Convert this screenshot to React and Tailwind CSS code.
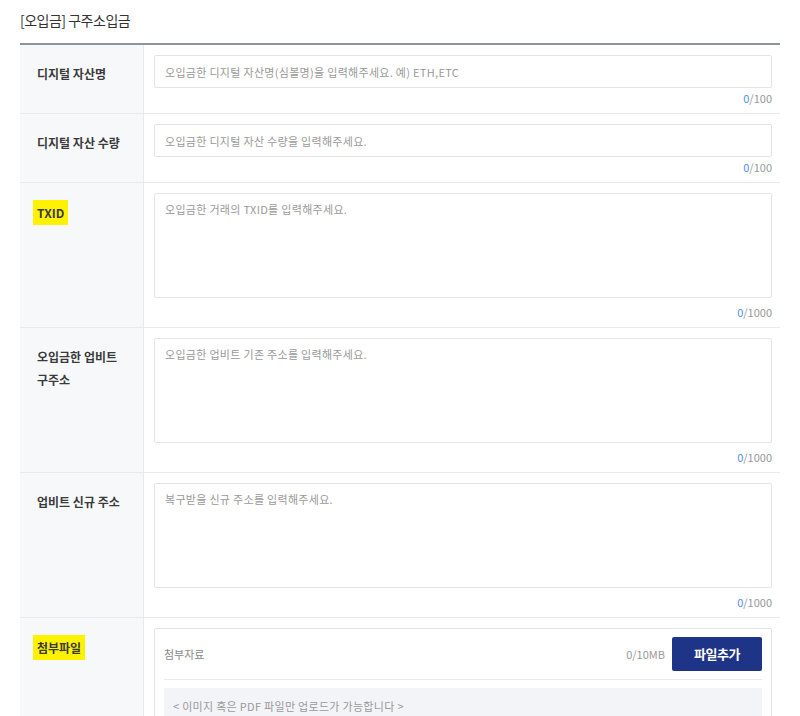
import React from "react";

const FONT = { fontFamily: '"Noto Sans CJK KR", "Noto Sans", sans-serif' };

function Counter({ max, textarea = false }) {
  return (
    <div className={"text-right text-[11px] leading-[18px] text-[#999] " + (textarea ? "mt-[5px]" : "mt-[1px]")}>
      <span className="text-[#4a8ff0]">0</span>/{max}
    </div>
  );
}

function Label({ children, marked = false }) {
  return (
    <div className="w-[124px] shrink-0 bg-[#f7f8fa] border-r border-[#e8e9ed] pl-[17px] pr-[10px] pt-[17px] text-[12px] leading-[23px] font-semibold text-[#3a3a3a]">
      {marked ? (
        <span className="inline-block bg-[#fff200] -ml-[4px] px-[4px] leading-[25px]">{children}</span>
      ) : (
        children
      )}
    </div>
  );
}

function Row({ label, marked, children }) {
  return (
    <div className="flex border-b border-[#e8e9ed]">
      <Label marked={marked}>{label}</Label>
      <div className="flex-1 pl-[10px] pr-[8px] pt-[10px] pb-[6px]">{children}</div>
    </div>
  );
}

function Input({ placeholder }) {
  return (
    <input
      placeholder={placeholder}
      className="block w-full h-[33px] border border-[#e3e4e8] rounded-[2px] px-[10px] text-[11px] tracking-[0.3px] text-[#333] placeholder:text-[#999] outline-none"
      style={FONT}
    />
  );
}

function Area({ placeholder }) {
  return (
    <textarea
      placeholder={placeholder}
      className="block w-full h-[105px] resize-none border border-[#e3e4e8] rounded-[2px] px-[10px] py-[7px] text-[11px] leading-[16px] tracking-[0.3px] text-[#333] placeholder:text-[#999] outline-none"
      style={FONT}
    />
  );
}

export default function App() {
  return (
    <div className="w-[800px] h-[716px] overflow-hidden bg-white px-[20px]" style={FONT}>
      <div className="h-[43px] pt-[10px] text-[14px] leading-[20px] tracking-[-0.5px] text-[#333]">[오입금] 구주소입금</div>
      <div className="border-t-2 border-[#8f939b]">
        <Row label="디지털 자산명">
          <Input placeholder="오입금한 디지털 자산명(심볼명)을 입력해주세요. 예) ETH,ETC" />
          <Counter max={100} />
        </Row>
        <Row label="디지털 자산 수량">
          <Input placeholder="오입금한 디지털 자산 수량을 입력해주세요." />
          <Counter max={100} />
        </Row>
        <Row label="TXID" marked>
          <Area placeholder="오입금한 거래의 TXID를 입력해주세요." />
          <Counter max={1000} textarea />
        </Row>
        <Row
          label={
            <>
              오입금한 업비트
              <br />
              구주소
            </>
          }
        >
          <Area placeholder="오입금한 업비트 기존 주소를 입력해주세요." />
          <Counter max={1000} textarea />
        </Row>
        <Row label="업비트 신규 주소">
          <Area placeholder="복구받을 신규 주소를 입력해주세요." />
          <Counter max={1000} textarea />
        </Row>
        <div className="flex">
          <Label marked>첨부파일</Label>
          <div className="flex-1 pl-[10px] pr-[8px] pt-[10px] pb-[20px]">
            <div className="border border-[#e3e4e8] rounded-[2px] px-[9px] pt-[8px] pb-[10px]">
              <div className="flex items-center h-[34px]">
                <span className="flex-1 text-[11px] text-[#888]">첨부자료</span>
                <span className="text-[11px] text-[#999] mr-[7px]">0/10MB</span>
                <button className="w-[90px] h-[34px] rounded-[2px] bg-[#1d3487] text-white text-[13px] font-bold tracking-[-0.5px]">
                  파일추가
                </button>
              </div>
              <div className="border-t border-[#e8e9ed] mt-[8px] pt-[8px]">
                <div className="bg-[#f3f4f7] h-[40px] pl-[9px] pt-[9px] text-[11px] leading-[18px] tracking-[0.3px] text-[#999]">
                  &lt; 이미지 혹은 PDF 파일만 업로드가 가능합니다 &gt;
                </div>
              </div>
            </div>
          </div>
        </div>
      </div>
    </div>
  );
}
